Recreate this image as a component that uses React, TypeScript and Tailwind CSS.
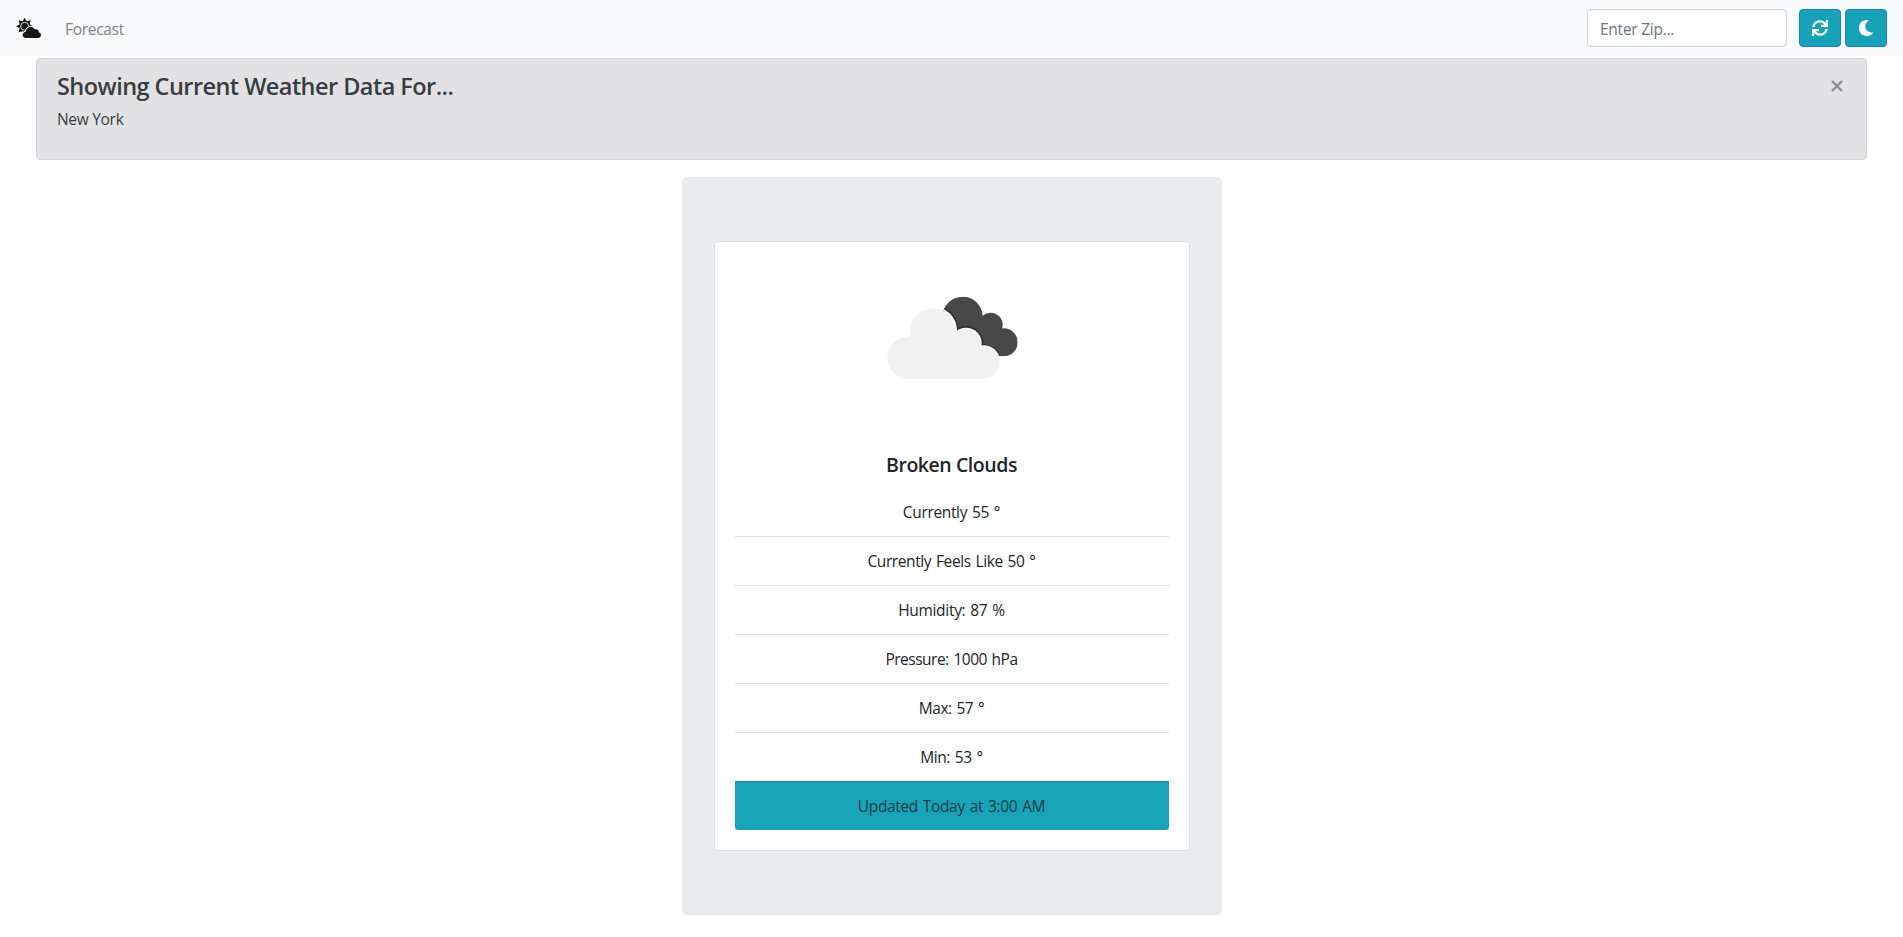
import { FaMoon, FaSync } from "react-icons/fa";

const readings = [
  { text: "Currently 55 °", style: "border-[#dedfe0] tracking-[-0.35px]" },
  { text: "Currently Feels Like 50 °", style: "border-[#dedfe0] tracking-[-0.4px]" },
  { text: "Humidity: 87 %", style: "border-[#dedfe0] tracking-[-0.3px]" },
  { text: "Pressure: 1000 hPa", style: "border-[#dedfe0] tracking-[-0.5px]" },
  { text: "Max: 57 °", style: "border-[#dedfe0] tracking-[-0.45px]" },
  { text: "Min: 53 °", style: "border-[#198a9d] tracking-[-0.4px]" },
];

function BrandIcon() {
  return (
    <svg className="h-5 w-[25px]" viewBox="0 0 75 60" fill="#161616">
      <path d="M26 -1L32 10L44 7L41 19L52 25L41 31L44 43L32 40L26 51L20 40L8 43L11 31L0 25L11 19L8 7L20 10Z" />
      <circle cx="26" cy="25" r="12" fill="none" stroke="#f8fafc" strokeWidth="2.5" />
      <path
        d="M31 60C17 60 16 44 29 41C31 26 49 20 56 34C66 32 69 38 68 43C79 46 76 60 66 60Z"
        stroke="#f8fafc"
        strokeWidth="5"
        paintOrder="stroke"
      />
    </svg>
  );
}

function BrokenCloudsIcon() {
  return (
    <svg className="h-[110px] w-40" viewBox="0 0 480 330">
      <defs>
        <clipPath id="rear-cloud">
          <circle cx="278" cy="110" r="60" />
          <circle cx="362" cy="134" r="36" />
          <circle cx="401" cy="187" r="42" />
          <path d="M230 110L330 100L400 190L390 229L240 170Z" />
        </clipPath>
      </defs>
      <g clipPath="url(#rear-cloud)">
        <rect width="480" height="330" fill="#484849" />
        <g fill="#2f2f31">
          <circle cx="188" cy="152" r="78" />
          <circle cx="288" cy="190" r="52" />
          <circle cx="341" cy="246" r="53" />
        </g>
        <g fill="#fff">
          <circle cx="188" cy="152" r="73" />
          <circle cx="288" cy="190" r="47" />
          <circle cx="341" cy="246" r="50" />
        </g>
      </g>
      <g fill="#f1f1f1">
        <circle cx="188" cy="152" r="67" />
        <circle cx="115" cy="233" r="63" />
        <circle cx="288" cy="190" r="42" />
        <circle cx="341" cy="249" r="47" />
        <path d="M115 170L188 150L288 180L341 220V296H115Z" />
      </g>
    </svg>
  );
}

export default function App() {
  return (
    <div className="h-[937px] overflow-hidden bg-white font-['Open_Sans','Noto_Sans',sans-serif] text-[15.5px] leading-6 text-[#212529]">
      <nav className="flex h-14 items-center bg-[#f8fafc] px-4">
        <BrandIcon />
        <a className="ml-6 pt-px tracking-[-0.3px] text-[#808182]">Forecast</a>
        <form className="ml-auto flex items-center">
          <input
            className="mr-3 h-[38px] w-[200px] rounded border border-[#ced4da] bg-white px-3 pt-0.5 tracking-[-0.25px] placeholder:text-[#6c757d]"
            placeholder="Enter Zip..."
          />
          <button type="button" className="mr-1 flex h-[38px] w-[42px] items-center justify-center rounded border border-[#1a7fd0] bg-[#17a2b8] text-white">
            <FaSync className="size-4" />
          </button>
          <button type="button" className="flex h-[38px] w-[42px] items-center justify-center rounded border border-[#1a7fd0] bg-[#17a2b8] text-white">
            <FaMoon className="size-4" />
          </button>
        </form>
      </nav>

      <div className="mx-9 mt-0.5 flex h-[102px] items-start justify-between rounded border border-[#d2d4d6] bg-[#e2e2e4] px-5 pt-[13px] text-[#383d41]">
        <div>
          <h4 className="mb-1.5 text-[23.5px] leading-[29px] font-semibold tracking-[-0.55px]">Showing Current Weather Data For...</h4>
          <p className="tracking-[-0.3px]">New York</p>
        </div>
        <svg className="mt-2 mr-[3px] size-3" viewBox="0 0 12 12" stroke="#8d8e90" strokeWidth="2.4">
          <path d="M1 1L11 11M11 1L1 11" />
        </svg>
      </div>

      <main className="mx-auto mt-[17px] h-[738px] w-[540px] rounded-[5px] bg-[#e9ebee] px-8 pt-16">
        <section className="flex h-[610px] flex-col items-center rounded border border-[#dcdee1] bg-white px-5">
          <div className="mt-[38px] mr-[3px]">
            <BrokenCloudsIcon />
          </div>
          <h5 className="mt-[63px] text-[19.5px] leading-6 font-semibold tracking-[-0.45px]">Broken Clouds</h5>
          <ul className="mt-[11px] w-full text-center [word-spacing:1.2px]">
            {readings.map((reading) => (
              <li key={reading.text} className={`flex h-[49px] items-center justify-center border-b ${reading.style}`}>
                {reading.text}
              </li>
            ))}
            <li className="flex h-12 items-center justify-center rounded-b-[3px] bg-[#18a3b8] tracking-[-0.35px] text-[#173d48]">
              Updated Today at 3:00 AM
            </li>
          </ul>
        </section>
      </main>
    </div>
  );
}
